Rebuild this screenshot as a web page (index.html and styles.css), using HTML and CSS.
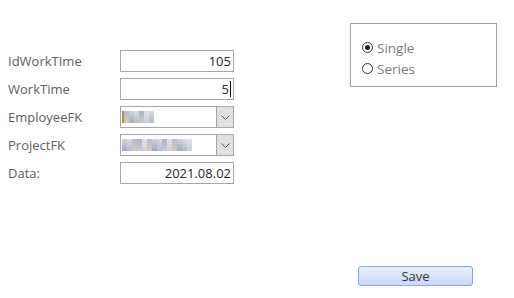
FILE: index.html
```html
<!DOCTYPE html>
<html lang="en">

<head>
        <meta charset="UTF-8">
        <meta name="viewport" content="width=device-width, initial-scale=1.0">
        <title>WorkTime</title>
        <link rel="stylesheet" href="styles.css">
</head>

<body>
        <div class="form">
                <div class="fields">
                        <div class="row">
                                <label>IdWorkTIme</label>
                                <div class="box number">105</div>
                        </div>
                        <div class="row">
                                <label>WorkTime</label>
                                <div class="box number">5<span class="caret"></span></div>
                        </div>
                        <div class="row">
                                <label>EmployeeFK</label>
                                <div class="box combo">
                                        <div class="blur">
                                                <span class="px f"></span><span class="px a"></span><span class="px b"></span><span class="px c"></span><span class="px d"></span><span class="px e"></span><span class="px c"></span>
                                        </div>
                                        <div class="arrow">
                                                <svg width="9" height="5" viewBox="0 0 9 5"><path d="M0.5 0.5 L4.5 4.5 L8.5 0.5" fill="none" stroke="#555" stroke-width="1"/></svg>
                                        </div>
                                </div>
                        </div>
                        <div class="row">
                                <label>ProjectFK</label>
                                <div class="box combo">
                                        <div class="blur">
                                                <span class="px b"></span><span class="px c"></span><span class="px a"></span><span class="px d"></span><span class="px e"></span><span class="px a"></span><span class="px b"></span><span class="px c"></span><span class="px d"></span><span class="px e"></span><span class="px a"></span><span class="px b"></span><span class="px c"></span><span class="px e"></span>
                                        </div>
                                        <div class="arrow">
                                                <svg width="9" height="5" viewBox="0 0 9 5"><path d="M0.5 0.5 L4.5 4.5 L8.5 0.5" fill="none" stroke="#555" stroke-width="1"/></svg>
                                        </div>
                                </div>
                        </div>
                        <div class="row">
                                <label>Data:</label>
                                <div class="box number">2021.08.02</div>
                        </div>
                </div>

                <div class="options">
                        <div class="option">
                                <span class="radio checked"></span>Single
                        </div>
                        <div class="option">
                                <span class="radio"></span>Series
                        </div>
                </div>
        </div>

        <div class="actions">
                <button class="save">Save</button>
        </div>
</body>

</html>
```

FILE: styles.css
```css
body {
        font-family: "Open Sans", "Noto Sans", sans-serif;
        font-size: 13px;
        background-color: #fff;
        margin: 0;
        padding: 0;
}

.form {
        display: flex;
        height: 266px;
}

.fields {
        width: 350px;
        padding: 50px 0 0 8px;
        box-sizing: border-box;
        display: flex;
        flex-direction: column;
        gap: 6px;
}

.row {
        display: flex;
        align-items: center;
        height: 22px;
}

.row label {
        width: 112px;
        color: #5e5e5e;
}

.box {
        width: 114px;
        height: 22px;
        box-sizing: border-box;
        border: 1px solid #a6a6a6;
        background-color: #fff;
        color: #262626;
}

.number {
        display: flex;
        align-items: center;
        justify-content: flex-end;
        padding-right: 2px;
}

.caret {
        display: inline-block;
        width: 1px;
        height: 16px;
        background-color: #000;
        margin-left: 1px;
}

.combo {
        display: flex;
        align-items: stretch;
}

.blur {
        flex: 1;
        display: flex;
        align-items: center;
        padding-left: 1px;
}

.px {
        display: inline-block;
        width: 5px;
        height: 12px;
        background: linear-gradient(#c3c8d4, #a9b0c0);
}

.px.a { background: linear-gradient(#b9c0cd, #d8c6b6); }
.px.b { background: linear-gradient(#cfd3dc, #a3aabb); }
.px.c { background: linear-gradient(#d8dbe2, #b5bbc8); }
.px.d { background: linear-gradient(#aab2c2, #c9ccd4); }
.px.e { background: linear-gradient(#e0e2e7, #cdd0d8); }
.px.f { width: 2px; background: #b0885e; }

.arrow {
        width: 16px;
        background-color: #e1e1e1;
        border-left: 1px solid #a6a6a6;
        display: flex;
        align-items: center;
        justify-content: center;
}

.options {
        margin-top: 23px;
        width: 147px;
        height: 64px;
        box-sizing: border-box;
        border: 1px solid #a0a0a0;
        padding: 13px 0 0 11px;
        align-self: flex-start;
}

.option {
        display: flex;
        align-items: center;
        height: 21px;
        font-size: 13.5px;
        color: #7a7a80;
}

.radio {
        width: 11px;
        height: 11px;
        box-sizing: border-box;
        border: 1px solid #333;
        border-radius: 50%;
        margin-right: 4px;
        position: relative;
}

.radio.checked::after {
        content: "";
        position: absolute;
        left: 2px;
        top: 2px;
        width: 5px;
        height: 5px;
        border-radius: 50%;
        background-color: #222;
}

.actions {
        padding-left: 358px;
}

.save {
        width: 115px;
        height: 20px;
        border: 1px solid #8aa4dc;
        border-radius: 3px;
        background: linear-gradient(#e9effd, #c9d8f6);
        font-family: "Open Sans", "Noto Sans", sans-serif;
        font-size: 13px;
        color: #333;
        padding: 0;
}
```
